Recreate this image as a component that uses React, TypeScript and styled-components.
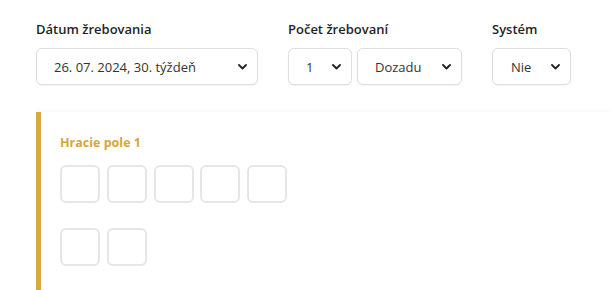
import React from 'react';
import styled, { createGlobalStyle } from 'styled-components';

const GlobalStyle = createGlobalStyle`
  html, body {
    margin: 0;
    padding: 0;
    background: #ffffff;
  }
  body {
    font-family: 'Open Sans', 'Liberation Sans', sans-serif;
    color: #222;
  }
`;

const Page = styled.div`
  padding: 20px 0 0 36px;
  overflow: hidden;
  height: 290px;
  box-sizing: border-box;
`;

const Filters = styled.div`
  display: flex;
  gap: 30px;
`;

const Field = styled.div`
  display: flex;
  flex-direction: column;
`;

const Label = styled.div`
  font-size: 13px;
  font-weight: 600;
  line-height: 18px;
  color: #1f1f1f;
  margin-bottom: 10px;
`;

const SelectRow = styled.div`
  display: flex;
  gap: 5px;
`;

const Select = styled.div<{ $width: number; $inset?: number }>`
  width: ${({ $width }) => $width}px;
  height: 37px;
  box-sizing: border-box;
  border: 1px solid #dedede;
  border-radius: 6px;
  box-shadow: 0 1px 2px rgba(0, 0, 0, 0.06);
  display: flex;
  align-items: center;
  justify-content: space-between;
  padding: 0 10px 0 ${({ $inset }) => $inset ?? 17}px;
  font-size: 13px;
  color: #333;
  background: #fff;
`;

const Chevron = () => (
  <svg width="9" height="6" viewBox="0 0 9 6">
    <path d="M1 1l3.5 3.5L8 1" fill="none" stroke="#222" strokeWidth="1.8" strokeLinecap="round" strokeLinejoin="round" />
  </svg>
);

const Panel = styled.div`
  margin-top: 27px;
  border-left: 5px solid #d4ac3e;
  box-shadow: 0 -2px 6px rgba(0, 0, 0, 0.03);
  padding: 22px 0 0 19px;
  min-height: 200px;
`;

const PanelTitle = styled.div`
  font-size: 12.5px;
  font-weight: 700;
  color: #d2a73c;
  line-height: 18px;
  margin-bottom: 13px;
`;

const NumberRow = styled.div`
  display: flex;
  gap: 6.75px;
  margin-bottom: 25px;
`;

const NumberBox = styled.div`
  width: 40px;
  height: 38px;
  box-sizing: border-box;
  border: 2px solid #e6e6e6;
  border-radius: 6px;
`;

export default function App() {
  return (
    <>
      <GlobalStyle />
      <Page>
        <Filters>
          <Field>
            <Label>Dátum žrebovania</Label>
            <Select $width={222}>
              <span>26. 07. 2024, 30. týždeň</span>
              <Chevron />
            </Select>
          </Field>
          <Field>
            <Label>Počet žrebovaní</Label>
            <SelectRow>
              <Select $width={64}>
                <span>1</span>
                <Chevron />
              </Select>
              <Select $width={105}>
                <span>Dozadu</span>
                <Chevron />
              </Select>
            </SelectRow>
          </Field>
          <Field>
            <Label>Systém</Label>
            <Select $width={79} $inset={18}>
              <span>Nie</span>
              <Chevron />
            </Select>
          </Field>
        </Filters>
        <Panel>
          <PanelTitle>Hracie pole 1</PanelTitle>
          <NumberRow>
            {[0, 1, 2, 3, 4].map((i) => (
              <NumberBox key={i} />
            ))}
          </NumberRow>
          <NumberRow>
            {[0, 1].map((i) => (
              <NumberBox key={i} />
            ))}
          </NumberRow>
        </Panel>
      </Page>
    </>
  );
}
